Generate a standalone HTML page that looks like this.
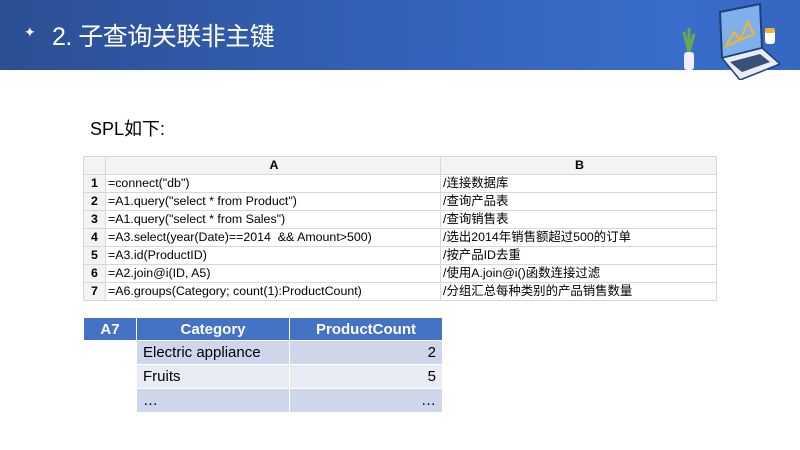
<!DOCTYPE html>
<html><head><meta charset="utf-8"><style>
body{margin:0;width:800px;height:450px;background:#fff;position:relative;overflow:hidden;font-family:"Liberation Sans","Noto Sans CJK SC",sans-serif}
.hd{position:absolute;left:0;top:0;width:800px;height:70px;background:linear-gradient(90deg,#2c4f94 0%,#3461b8 50%,#3a6dcb 85%,#3566c0 100%)}
.tt{position:absolute;left:52px;top:17px;color:#fff;font-size:25px;letter-spacing:-0.5px}
.st{position:absolute;left:24px;top:24px;color:#fff;font-size:14px}
.spl{position:absolute;left:90px;top:115px;font-size:18px;color:#000}
table{border-collapse:collapse;position:absolute}
.t1{left:83px;top:156px;font-size:12.4px}
.t1 td{border:1px solid #d8d8d8;height:17px;padding:0 0 0 2px;white-space:nowrap;line-height:17px}
.t1 tr:first-child td{background:#f3f3f3;font-weight:bold;text-align:center}
.t1 td.n{background:#f3f3f3;font-weight:bold;text-align:center;width:19px;padding:0}
.t2{left:83px;top:317px;font-size:15px;border-collapse:separate;border-spacing:1px}
.t2 td{height:23px;padding:0 6px}
.t2 tr:first-child td{height:22px}
.h{background:#4472c4;color:#fff;font-weight:bold;text-align:center}
.a{background:#cfd5ea}.b{background:#e9ebf5}
</style></head><body>
<div class="hd"></div>
<div class="st">✦</div>
<div class="tt">2. 子查询关联非主键</div>
<svg style="position:absolute;left:670px;top:2px" width="120" height="78" viewBox="0 0 120 78">
<polygon points="50,10 90,2 92,46 52,56" fill="#7fb0ea" stroke="#1d3f7a" stroke-width="2"/>
<polygon points="56,44 64,30 70,38 78,20 84,32" fill="none" stroke="#f3b52d" stroke-width="2"/>
<polygon points="52,56 92,46 110,62 70,78" fill="#e8ecf4" stroke="#1d3f7a" stroke-width="1.5"/>
<polygon points="60,60 90,52 100,60 72,70" fill="#3a4f7a"/>
<rect x="14" y="50" width="10" height="18" rx="3" fill="#eef"/>
<path d="M19 50 L14 30 M19 50 L19 26 M19 50 L24 32" stroke="#6aa84f" stroke-width="3"/>
<rect x="95" y="28" width="10" height="14" rx="3" fill="#fff"/><rect x="95" y="26" width="10" height="5" rx="2" fill="#f3b52d"/>
</svg>
<div class="spl">SPL如下:</div>
<table class="t1">
<tr><td class="n" style="width:21px"></td><td style="width:332px">A</td><td style="width:273px">B</td></tr>
<tr><td class="n">1</td><td>=connect("db")</td><td>/连接数据库</td></tr>
<tr><td class="n">2</td><td>=A1.query("select * from Product")</td><td>/查询产品表</td></tr>
<tr><td class="n">3</td><td>=A1.query("select * from Sales")</td><td>/查询销售表</td></tr>
<tr><td class="n">4</td><td>=A3.select(year(Date)==2014 &nbsp;&amp;&amp; Amount&gt;500)</td><td>/选出2014年销售额超过500的订单</td></tr>
<tr><td class="n">5</td><td>=A3.id(ProductID)</td><td>/按产品ID去重</td></tr>
<tr><td class="n">6</td><td>=A2.join@i(ID, A5)</td><td>/使用A.join@i()函数连接过滤</td></tr>
<tr><td class="n">7</td><td>=A6.groups(Category; count(1):ProductCount)</td><td>/分组汇总每种类别的产品销售数量</td></tr>
</table>
<table class="t2">
<tr><td class="h" style="width:40px">A7</td><td class="h" style="width:140px">Category</td><td class="h" style="width:140px">ProductCount</td></tr>
<tr><td></td><td class="a">Electric appliance</td><td class="a" style="text-align:right">2</td></tr>
<tr><td></td><td class="b">Fruits</td><td class="b" style="text-align:right">5</td></tr>
<tr><td></td><td class="a">…</td><td class="a" style="text-align:right">…</td></tr>
</table>
</body></html>
